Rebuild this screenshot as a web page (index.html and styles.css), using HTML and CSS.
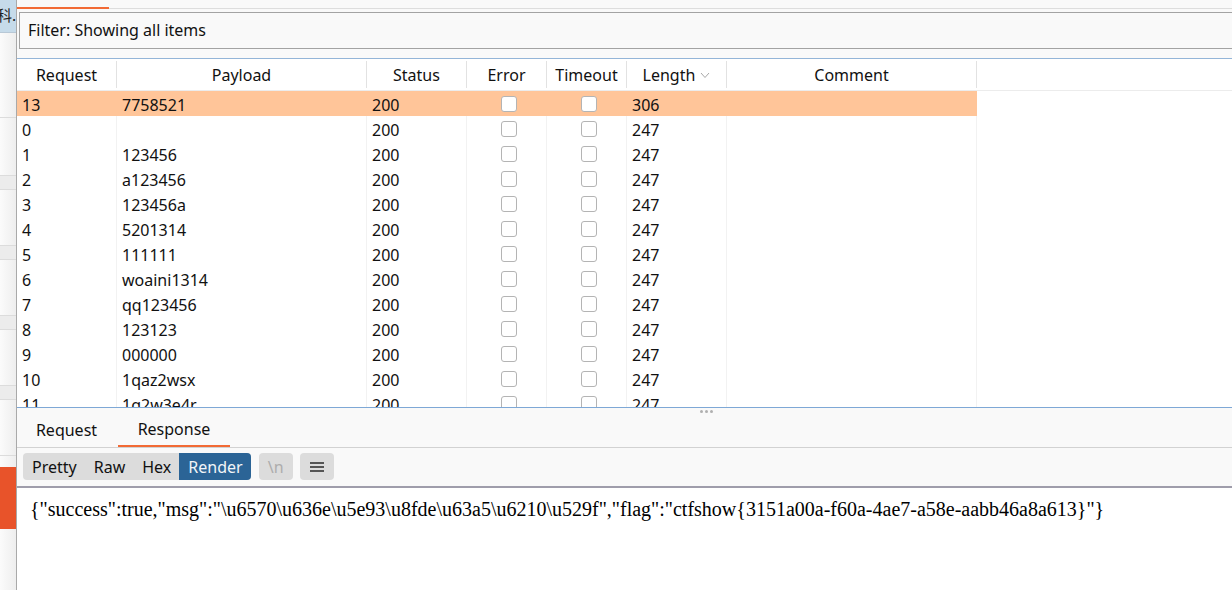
FILE: index.html
```html
<!DOCTYPE html>
<html>
<head>
<meta charset="utf-8">
<link rel="stylesheet" href="styles.css">
</head>
<body>
<div class="app">
  <aside class="side">
    <div class="side-top">科.</div>
    <div class="side-band b1"></div>
    <div class="side-band b2"></div>
    <div class="side-band b3"></div>
    <div class="side-band b4"></div>
    <div class="side-band b5"></div>
    <div class="side-orange"></div>
  </aside>
  <main class="main">
    <div class="tabstrip"><span class="tab-underline"></span></div>
    <div class="filter-wrap">
      <div class="filter">Filter: Showing all items</div>
    </div>
    <div class="table">
      <div class="row head">
        <div class="c">Request</div>
        <div class="c">Payload</div>
        <div class="c">Status</div>
        <div class="c">Error</div>
        <div class="c">Timeout</div>
        <div class="c">Length <svg class="chev" width="10" height="7" viewBox="0 0 10 7"><polyline points="1,1 5,5.5 9,1" fill="none" stroke="#a8a8a8" stroke-width="1"/></svg></div>
        <div class="c">Comment</div>
        <div class="c last"></div>
      </div>
      <div class="row sel"><div class="c">13</div><div class="c">7758521</div><div class="c">200</div><div class="c cb"><span class="box"></span></div><div class="c cb"><span class="box"></span></div><div class="c">306</div><div class="c"></div><div class="c last"></div></div>
      <div class="row"><div class="c">0</div><div class="c"></div><div class="c">200</div><div class="c cb"><span class="box"></span></div><div class="c cb"><span class="box"></span></div><div class="c">247</div><div class="c"></div><div class="c last"></div></div>
      <div class="row"><div class="c">1</div><div class="c">123456</div><div class="c">200</div><div class="c cb"><span class="box"></span></div><div class="c cb"><span class="box"></span></div><div class="c">247</div><div class="c"></div><div class="c last"></div></div>
      <div class="row"><div class="c">2</div><div class="c">a123456</div><div class="c">200</div><div class="c cb"><span class="box"></span></div><div class="c cb"><span class="box"></span></div><div class="c">247</div><div class="c"></div><div class="c last"></div></div>
      <div class="row"><div class="c">3</div><div class="c">123456a</div><div class="c">200</div><div class="c cb"><span class="box"></span></div><div class="c cb"><span class="box"></span></div><div class="c">247</div><div class="c"></div><div class="c last"></div></div>
      <div class="row"><div class="c">4</div><div class="c">5201314</div><div class="c">200</div><div class="c cb"><span class="box"></span></div><div class="c cb"><span class="box"></span></div><div class="c">247</div><div class="c"></div><div class="c last"></div></div>
      <div class="row"><div class="c">5</div><div class="c">111111</div><div class="c">200</div><div class="c cb"><span class="box"></span></div><div class="c cb"><span class="box"></span></div><div class="c">247</div><div class="c"></div><div class="c last"></div></div>
      <div class="row"><div class="c">6</div><div class="c">woaini1314</div><div class="c">200</div><div class="c cb"><span class="box"></span></div><div class="c cb"><span class="box"></span></div><div class="c">247</div><div class="c"></div><div class="c last"></div></div>
      <div class="row"><div class="c">7</div><div class="c">qq123456</div><div class="c">200</div><div class="c cb"><span class="box"></span></div><div class="c cb"><span class="box"></span></div><div class="c">247</div><div class="c"></div><div class="c last"></div></div>
      <div class="row"><div class="c">8</div><div class="c">123123</div><div class="c">200</div><div class="c cb"><span class="box"></span></div><div class="c cb"><span class="box"></span></div><div class="c">247</div><div class="c"></div><div class="c last"></div></div>
      <div class="row"><div class="c">9</div><div class="c">000000</div><div class="c">200</div><div class="c cb"><span class="box"></span></div><div class="c cb"><span class="box"></span></div><div class="c">247</div><div class="c"></div><div class="c last"></div></div>
      <div class="row"><div class="c">10</div><div class="c">1qaz2wsx</div><div class="c">200</div><div class="c cb"><span class="box"></span></div><div class="c cb"><span class="box"></span></div><div class="c">247</div><div class="c"></div><div class="c last"></div></div>
      <div class="row"><div class="c">11</div><div class="c">1q2w3e4r</div><div class="c">200</div><div class="c cb"><span class="box"></span></div><div class="c cb"><span class="box"></span></div><div class="c">247</div><div class="c"></div><div class="c last"></div></div>
    </div>
    <div class="split">
      <span class="grip"><i></i><i></i><i></i></span>
      <div class="msgtabs">
        <span class="mtab">Request</span>
        <span class="mtab active">Response</span>
      </div>
    </div>
    <div class="toolbar">
      <div class="seg">
        <span class="sbtn">Pretty</span>
        <span class="sbtn">Raw</span>
        <span class="sbtn">Hex</span>
        <span class="sbtn on">Render</span>
      </div>
      <span class="tbtn dim">\n</span>
      <span class="tbtn"><svg width="16" height="12" viewBox="0 0 16 12"><rect x="1" y="1" width="14" height="2" fill="#555"/><rect x="1" y="5" width="14" height="2" fill="#555"/><rect x="1" y="9" width="14" height="2" fill="#555"/></svg></span>
    </div>
    <div class="render">{"success":true,"msg":"\u6570\u636e\u5e93\u8fde\u63a5\u6210\u529f","flag":"ctfshow{3151a00a-f60a-4ae7-a58e-aabb46a8a613}"}</div>
  </main>
</div>
</body>
</html>
```
FILE: styles.css
```css
html, body {
  margin: 0;
  padding: 0;
}
body {
  width: 1232px;
  height: 590px;
  overflow: hidden;
  background: #f9f9f9;
  font-family: "Noto Sans", "Open Sans", sans-serif;
  font-size: 16px;
  color: #111;
}
.app {
  display: flex;
  height: 590px;
}
.side {
  width: 16px;
  flex: none;
  position: relative;
  background: linear-gradient(to right, #fbfbfb, #eeeeee);
  border-right: 1px solid #a9a9a9;
  overflow: hidden;
}
.side-top {
  height: 32px;
  background: #c6dbea;
  border-bottom: 1px solid #b8c8d6;
  font-family: "Noto Sans CJK SC", sans-serif;
  font-size: 15px;
  line-height: 30px;
  margin-left: -3px;
  color: #222;
  white-space: nowrap;
}
.side-band {
  position: absolute;
  left: 0;
  right: 0;
  height: 13px;
  border-top: 1px solid #dcdcdc;
  border-bottom: 1px solid #dcdcdc;
  background: #ececec;
}
.b1 { top: 117px; height: 0; border-bottom: none; }
.b2 { top: 175px; }
.b3 { top: 245px; }
.b4 { top: 315px; }
.b5 { top: 385px; }
.side-orange {
  position: absolute;
  left: 0;
  right: 0;
  top: 455px;
  height: 0;
  border-top: 1px solid #dcdcdc;
}
.side-orange::after {
  content: "";
  position: absolute;
  left: 0;
  right: 0;
  top: 11px;
  height: 62px;
  background: #e8532a;
}
.main {
  flex: 1;
  display: flex;
  flex-direction: column;
  min-width: 0;
  background: #f9f9f9;
}
.tabstrip {
  height: 8px;
  border-bottom: 1px solid #dddddd;
  display: flex;
  align-items: flex-end;
}
.tab-underline {
  width: 92px;
  height: 2px;
  background: #f26a35;
  margin-bottom: -1px;
}
.filter-wrap {
  padding: 3px 0 0 2px;
  height: 47px;
  box-sizing: border-box;
}
.filter {
  height: 37px;
  box-sizing: border-box;
  border: 1px solid #a3a3a3;
  border-right: none;
  background: #f9f9f9;
  padding-left: 8px;
  line-height: 34px;
  font-size: 16px;
  color: #111;
}
.filter-wrap + .table { margin-top: 2px; }
.table {
  height: 350px;
  box-sizing: border-box;
  border-top: 1px solid #94b5d8;
  border-bottom: 1px solid #7ea8d6;
  background: #fff;
  overflow: hidden;
}
.row {
  display: grid;
  grid-template-columns: 100px 250px 100px 80px 80px 100px 250px 1fr;
  height: 25px;
  align-items: center;
}
.row .c {
  height: 25px;
  line-height: 25px;
  padding: 2px 0 0 5px;
  border-right: 1px solid #f2f2f2;
  box-sizing: border-box;
  white-space: nowrap;
  color: #111;
}
.row .c.last { border-right: none; }
.row.head {
  height: 32px;
  border-bottom: 1px solid #ececec;
  box-sizing: border-box;
}
.row.head .c {
  height: 27px;
  line-height: 27px;
  padding: 1px 0 0 0;
  text-align: center;
  border-right: 1px solid #e2e2e2;
  color: #111;
}
.row.head .c.last { border-right: none; }
.chev { vertical-align: 2px; margin-left: 1px; }
.row.sel { background: #ffc599; }
.row.sel .c { border-right-color: transparent; }
.row.sel .c.last { background: #fff; }
.c.cb {
  display: flex;
  justify-content: center;
  align-items: center;
  padding: 0;
}
.box {
  width: 16px;
  height: 16px;
  box-sizing: border-box;
  border: 1.5px solid #b4b4b4;
  border-radius: 3px;
  background: #fff;
  margin-left: 4px;
}
.split {
  height: 39px;
  position: relative;
  border-bottom: 1px solid #d2d2d2;
}
.grip {
  position: absolute;
  left: 683px;
  top: 2px;
  display: flex;
  gap: 2px;
}
.grip i {
  width: 3px;
  height: 3px;
  border-radius: 50%;
  background: #b0b0b0;
}
.msgtabs {
  display: flex;
  height: 39px;
  padding-left: 1px;
}
.mtab {
  width: 100px;
  display: flex;
  align-items: center;
  justify-content: center;
  padding-top: 4px;
  box-sizing: border-box;
  font-size: 16px;
  color: #111;
}
.mtab:first-child { padding-right: 3px; }
.mtab.active {
  width: 112px;
  border-bottom: 2px solid #f26a35;
}
.toolbar {
  height: 40px;
  box-sizing: border-box;
  border-bottom: 2px solid #9f9dab;
  display: flex;
  align-items: center;
  gap: 8px;
  padding-left: 6px;
  padding-bottom: 1px;
}
.seg {
  display: flex;
  height: 27px;
  background: #dcdcdc;
  border-radius: 4px;
  overflow: hidden;
}
.sbtn {
  display: flex;
  align-items: center;
  padding: 0 8px 0 9px;
  font-size: 16px;
  color: #111;
}
.sbtn.on {
  background: #2b6496;
  color: #f2f5f8;
}
.tbtn {
  width: 34px;
  height: 27px;
  border-radius: 4px;
  background: #dcdcdc;
  display: flex;
  align-items: center;
  justify-content: center;
  font-size: 16px;
}
.tbtn + .tbtn { margin-left: -1px; }
.tbtn.dim { color: #adadad; }
.render {
  flex: 1;
  background: #fff;
  font-family: "Liberation Serif", serif;
  font-size: 20px;
  padding: 10px 0 0 13px;
  color: #000;
  white-space: nowrap;
}
```
